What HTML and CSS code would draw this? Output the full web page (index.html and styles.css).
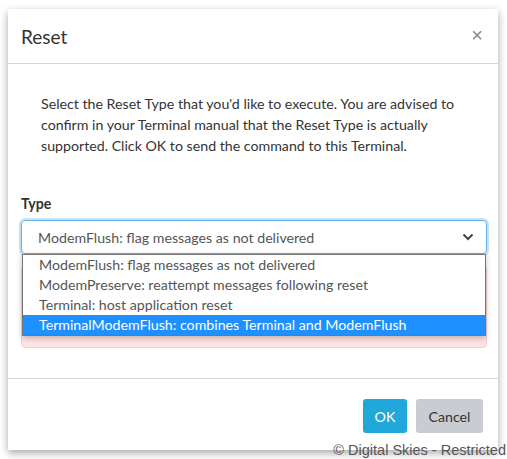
FILE: index.html
```html
<!DOCTYPE html>
<html>
<head>
<meta charset="utf-8">
<link rel="stylesheet" href="styles.css">
</head>
<body>
<div class="dialog">
  <div class="header">
    <h4 class="title">Reset</h4>
    <span class="close">&times;</span>
  </div>
  <div class="body">
    <p class="intro">Select the Reset Type that you'd like to execute. You are advised to confirm in your Terminal manual that the Reset Type is actually supported. Click OK to send the command to this Terminal.</p>
    <label class="label">Type</label>
    <div class="field">
      <div class="select">
        <span>ModemFlush: flag messages as not delivered</span>
        <svg class="caret" width="12" height="8" viewBox="0 0 12 8"><path d="M1.5 1.5 L6 6 L10.5 1.5" fill="none" stroke="#444" stroke-width="2"/></svg>
      </div>
      <ul class="options">
        <li>ModemFlush: flag messages as not delivered</li>
        <li>ModemPreserve: reattempt messages following reset</li>
        <li>Terminal: host application reset</li>
        <li class="active">TerminalModemFlush: combines Terminal and ModemFlush</li>
      </ul>
    </div>
    <div class="alert"></div>
  </div>
  <div class="footer">
    <button class="btn ok">OK</button>
    <button class="btn cancel">Cancel</button>
  </div>
</div>
<div class="copyright">© Digital Skies - Restricted</div>
</body>
</html>
```
FILE: styles.css
```css
html, body {
  margin: 0;
  padding: 0;
  background: #fff;
}
body {
  font-family: Lato, "Noto Sans", sans-serif;
  color: #333;
  width: 507px;
  height: 459px;
  overflow: hidden;
  position: relative;
}
.dialog {
  margin: 9px 0 0 8px;
  width: 490px;
  height: 441px;
  background: #fff;
  box-shadow: 0 3px 8px rgba(0,0,0,0.35);
  display: flex;
  flex-direction: column;
}
.header {
  border-bottom: 1px solid #d6d6d6;
  display: flex;
  align-items: center;
  justify-content: space-between;
  padding: 0 15px 0 13px;
  box-sizing: border-box;
  height: 55px;
}
.title {
  margin: 0;
  font-family: Lato, sans-serif;
  font-weight: 400;
  font-size: 19px;
  color: #333;
}
.close {
  font-family: "Liberation Sans", sans-serif;
  font-size: 20px;
  color: #888;
  line-height: 1;
  margin-top: -2px;
}
.body {
  height: 315px;
  border-bottom: 1px solid #d6d6d6;
  padding: 0 11px 0 13px;
  box-sizing: border-box;
  position: relative;
}
.intro {
  margin: 29px 0 0;
  padding: 0 20px;
  font-size: 14.2px;
  line-height: 21px;
  color: #333;
}
.label {
  display: block;
  margin-top: 39px;
  font-weight: 700;
  font-size: 14.2px;
  color: #333;
}
.field {
  position: relative;
  margin-top: 8px;
  z-index: 2;
}
.select {
  height: 34px;
  box-sizing: border-box;
  border: 1px solid #66afe9;
  border-radius: 4px;
  box-shadow: 0 0 0 2px rgba(102,175,233,0.35), 0 3px 4px rgba(0,0,0,0.08);
  display: flex;
  align-items: center;
  justify-content: space-between;
  padding: 0 12px 0 16px;
  font-size: 14.2px;
  color: #555;
}
.options {
  position: absolute;
  top: 34px;
  left: 1px;
  right: 1px;
  margin: 0;
  padding: 0;
  list-style: none;
  background: #fff;
  border: 1px solid #767676;
  box-shadow: 0 2px 6px rgba(0,0,0,0.25);
}
.options li {
  height: 20px;
  line-height: 20px;
  padding-left: 16px;
  font-size: 14.2px;
  color: #555;
}
.options li.active {
  background: #1e90ff;
  color: #fff;
}
.alert {
  margin-top: 12px;
  height: 82px;
  background: #fde4e4;
  border: 1px solid #f6d0d0;
  border-radius: 4px;
  box-sizing: border-box;
}
.footer {
  flex: 1;
  display: flex;
  justify-content: flex-end;
  align-items: flex-start;
  gap: 9px;
  padding: 20px 15px 0 0;
}
.btn {
  height: 34px;
  border: none;
  border-radius: 3px;
  font-family: Lato, "Noto Sans", sans-serif;
  font-size: 14.2px;
  padding: 0;
}
.ok {
  background: #1fa8d9;
  color: #fff;
  width: 44px;
}
.cancel {
  background: #c9cdd3;
  color: #333;
  width: 67px;
}
.copyright {
  position: absolute;
  right: 1px;
  bottom: 1px;
  font-family: "Liberation Sans", Arial, sans-serif;
  font-size: 14.5px;
  color: #555;
}
```
